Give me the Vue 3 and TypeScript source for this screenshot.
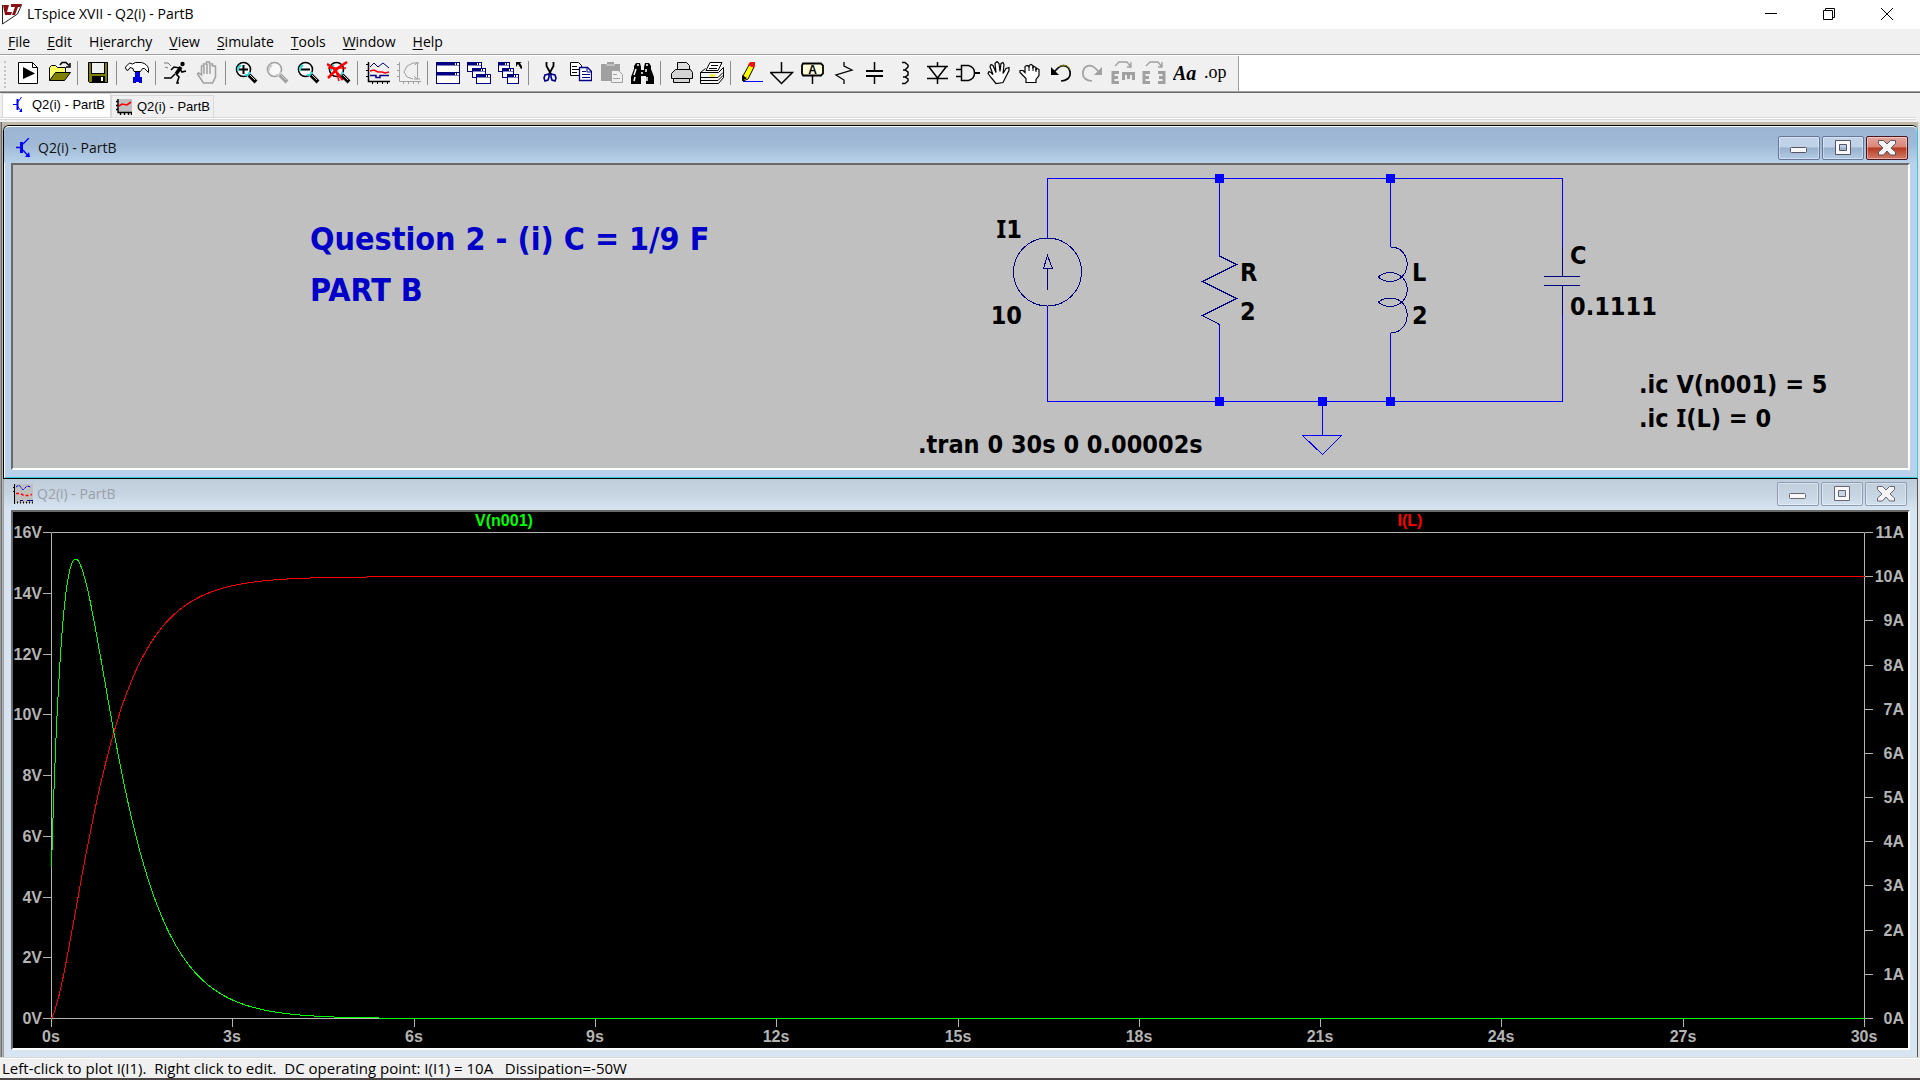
<script setup lang="ts">
interface Tool {
  name: string
  art: string
}

const menus = [
  { key: 'F', rest: 'ile' },
  { key: 'E', rest: 'dit' },
  { key: 'i', before: 'H', rest: 'erarchy' },
  { key: 'V', rest: 'iew' },
  { key: 'S', rest: 'imulate' },
  { key: 'T', rest: 'ools' },
  { key: 'W', rest: 'indow' },
  { key: 'H', rest: 'elp' },
]

const lens = (stroke: string, glint: string, inner: string) =>
  `<circle cx="9.500" cy="8.500" r="7" fill="#f8f8f8" stroke="${stroke}" stroke-width="1.600"/>
   <path d="M4 10V7l3-3M11 14h3l2-3" fill="none" stroke="${glint}" stroke-width="2"/>${inner}
   <path d="M15 14l7 7" stroke="${stroke}" stroke-width="4"/><path d="M16 14l5 5" stroke="#ccc" stroke-width="1"/>`

const miniWindow = (x: number, y: number, w: number, h: number) =>
  `<rect x="${x + 0.5}" y="${y + 0.5}" width="${w - 1}" height="${h - 1}" fill="#fff" stroke="#000080"/>
   <path d="M${x} ${y + 2}h${w}" stroke="#000080" stroke-width="3"/>
   <path d="M${x + w - 5} ${y + 2}h1m1 0h2" stroke="#fff" stroke-width="2"/>`

const openHand =
  'M9 22.500l-5-6-3-4 1-2 2 1 2 2-3-8 1-2 2 1 3 7-1-9 2-2 2 2 1 8 1-8 2-1 1 2-1 9 3-5 3-1v3l-4 8-2 4z'
const closedHand =
  'M8 21.500v-4l-6-6v-2h3l2 2v-6l2-1 2 1v1-2l2-1 2 1v2l1-1 2 1v2l1-1 2 1v6l-3 4v3z'

const toolGroups: Tool[][] = [
  [
    { name: 'New schematic', art: '<path d="M2.500 1.500h14l5 5v16h-19z" fill="#fff" stroke="#000"/><path d="M16.500 1.500v5h5" fill="none" stroke="#000"/><path d="M7 6l12 6.500L7 18z"/>' },
    { name: 'Open', art: '<path d="M2.500 19.500v-13l2-2h4l2 2h8v5" fill="#ff6" stroke="#000"/><path d="M2.500 19.500l6-8h15l-6 8z" fill="#808000" stroke="#000"/><path d="M13 4l2-2.500h4l3 3M23 2v4h-4" fill="none" stroke="#000" stroke-width="1.500"/>' },
  ],
  [{ name: 'Save', art: '<path d="M2.500 1.500h19v20h-18l-1-1z" fill="#808000" stroke="#000"/><rect x="5.500" y="1.500" width="13" height="11" fill="#f0f0f0" stroke="#000"/><path d="M6 15h13v6H6z"/><path d="M15 16h2v4h-2z" fill="#fff"/>' }],
  [{ name: 'Control panel', art: '<path d="M10 9h5v7h2v6h-3v-1h-3v1H8v-6h2z" fill="#0000e0"/><path d="M1 8.500L.5 6l4-4 3 1 3-1.500h6c4 1 6 3 7 6v4l-4-4-2 0-2 3H9l-1-3-3-1-2 3z" fill="#fff" stroke="#000"/>' }],
  [
    { name: 'Run', art: '<circle cx="18.500" cy="3" r="2.200"/><path d="M17 6l-5 7" stroke="#000" stroke-width="3.500"/><path d="M16 7l-6-1-3 3M16 8l2 3 4-1M12 13l3 3-2 6h2M11 13l-4 4H0" fill="none" stroke="#000" stroke-width="1.600"/><path d="M0 2h4l3 3M1 6l3 1" fill="none" stroke="#777"/>' },
    { name: 'Halt', art: '<path d="M8.500 22l-6-9 1-1 2 1 1 1V5h2v-2h3V1h3v2h3v2h3v11l-3 6z" fill="#f0f0f0" stroke="#a0a0a0" stroke-width="1.500"/><path d="M9 5v8M12 3v10M15 4v9" stroke="#a0a0a0" stroke-width="1.500"/>' },
  ],
  [
    { name: 'Zoom area', art: lens('#000', '#2dd', '<path d="M5 8.500h9M9.500 4v9" stroke="#000" stroke-width="2"/>') },
    { name: 'Pan', art: lens('#a0a0a0', '#ccc', '') },
    { name: 'Zoom back', art: lens('#000', '#2dd', '<path d="M5 8.500h9" stroke="#000" stroke-width="2"/>') },
    { name: 'Zoom to fit', art: lens('#000', '#2dd', '<path d="M0 3l6 4 10 12M20 1l-9 6L1 17" fill="none" stroke="#f00" stroke-width="2.500"/><path d="M1 7l18 0M9 10l3 10" stroke="#f00" stroke-width="1.500"/>') },
  ],
  [
    { name: 'Autorange', art: '<path d="M2.500 1v19.500H24" fill="none" stroke="#000" stroke-width="1.500"/><path d="M0 3.500h3M0 9.500h3M0 15.500h3M6.500 20v3M11.500 20v3M16.500 20v3M21.500 20v3" stroke="#000"/><path d="M4 6l4-4 4 4 5-4 6 5" fill="none" stroke="#008"/><path d="M4 10l4-1 4 2h4l3 1 4-1" fill="none" stroke="#f00" stroke-width="1.500"/><path d="M4 14.500h6v2h4v-2h9" fill="none" stroke="#008" stroke-width="1.500"/>' },
    { name: 'Efficiency report', art: '<path d="M2.500 1v19.500H24M0 3.500h3M0 9.500h3M0 15.500h3M6.500 20v3M11.500 20v3M16.500 20v3M21.500 20v3" fill="none" stroke="#a0a0a0"/><path d="M16 2l-6 3-3 6 3 5 6 2M20.500 2v16M16 2h6M17 18h6M20 1l-2 3M20 18l-3-3" fill="none" stroke="#a0a0a0"/>' },
  ],
  [
    { name: 'Tile windows', art: miniWindow(0, 1, 24, 11) + miniWindow(0, 11, 24, 12) },
    { name: 'Cascade windows', art: miniWindow(0, 1, 15, 10) + miniWindow(5, 7, 14, 10) + miniWindow(9, 13, 15, 10) },
    { name: 'Close windows', art: miniWindow(0, 1, 12, 10) + miniWindow(4, 7, 12, 10) + miniWindow(9, 13, 12, 10) + '<path d="M18 1h6l-2 1 3 5-2 1-3-5-2 3z"/>' },
  ],
  [
    { name: 'Cut', art: '<path d="M9.500 1v4l5 9M16.500 1v4l-5 9" fill="none" stroke="#000" stroke-width="1.800"/><path d="M12 13l-4 1-1 3 1 3 3-1 1-3zM14 13l4 1 1 3-1 3-3-1-1-3z" fill="none" stroke="#008" stroke-width="1.600"/>' },
    { name: 'Copy', art: '<path d="M2.500 1.500h8l3 3v10h-11z" fill="#fff" stroke="#000"/><path d="M4 5.500h5M4 8.500h7M4 11.500h5" stroke="#000"/><path d="M11.500 6.500h8l4 4v9h-12z" fill="#fff" stroke="#008" stroke-width="1.300"/><path d="M19 6v5h5M14 10.500h4M14 13.500h8M14 16.500h8" fill="none" stroke="#008"/>' },
    { name: 'Paste', art: '<path d="M2 3h6V1h7v2h6v17H2z" fill="#a0a0a0"/><path d="M7 4h9" stroke="#ddd"/><path d="M12.500 9.500h7l4 4v8h-11z" fill="#f0f0f0" stroke="#a0a0a0"/><path d="M14 13.500h4M14 17.500h7" stroke="#a0a0a0"/>' },
    { name: 'Find', art: '<path d="M4 5l2-3h4l1 4v3h3V6l1-4h4l2 3v3l3 8v7h-8v-8h-5v8H1v-7l3-8z"/><path d="M7 4h2M16 4h2M6 8l-2 6M16 8v3M5 16l-1 4M17 16v4M12 11v2" stroke="#fff" stroke-width="1.500"/>' },
  ],
  [
    { name: 'Print setup', art: '<path d="M8.500 9.500v-8h9l3 3v5" fill="#ddd" stroke="#000"/><path d="M2.500 12.500l4-4h15l2 3v6h-3v4h-16v-4h-2z" fill="#d4d4d4" stroke="#000"/><path d="M5 17.500h15" stroke="#000"/>' },
    { name: 'Print', art: '<path d="M6 9.500l4-8h12l-4 8z" fill="#fff" stroke="#000"/><path d="M11 4.500h7M9 7.500h8" stroke="#000"/><path d="M.5 11.500l5-4M18.500 11.500l5-5v10l-5 6H.5v-11z" fill="#f4f4f4" stroke="#000"/><path d="M1 16.500h17l5-5M1 19.500h17l5-5" fill="none" stroke="#000"/><path d="M10 14.500h5" stroke="#ee0" stroke-width="2"/>' },
  ],
  [
    { name: 'Wire', art: '<path d="M4 15l6-11 5 2-6 12-5 2z" fill="#ff0" stroke="#000"/><path d="M3 20v-6l5 3z"/><path d="M9 4l2-3h5v4l-1 2z" fill="#f01010"/><path d="M4 20.500h20" stroke="#00f"/>' },
    { name: 'Ground', art: '<path d="M11.500 1v10M.5 11.500h22l-11 11z" fill="none" stroke="#000" stroke-width="1.500"/>' },
    { name: 'Label net', art: '<path d="M2 2.500h18l2 2v8l-2 2H2l-1-2v-8z" fill="#ffd" stroke="#000" stroke-width="1.800"/><path d="M11.500 15v8" stroke="#000" stroke-width="1.500"/><text x="11.500" y="13" text-anchor="middle" font-family="Liberation Sans" font-size="12" font-weight="700">A</text>' },
    { name: 'Resistor', art: '<path d="M12 1v4l8 4-16 5 8 5v4" fill="none" stroke="#000" stroke-width="1.300"/>' },
    { name: 'Capacitor', art: '<path d="M11.500 1v8M11.500 15v8" stroke="#000" stroke-width="1.500"/><path d="M3 10h17M3 15h17" stroke="#000" stroke-width="2"/>' },
    { name: 'Inductor', art: '<path d="M8 1.500h3l3 2.500v2l-3 3H9h2l3 2v3l-3 2H9h2l3 2v2l-3 2.500H8" fill="none" stroke="#000" stroke-width="1.500"/>' },
    { name: 'Diode', art: '<path d="M12.500 1v4.500M12.500 17v6M2 5.500h21M2 17.500h21M4 6l8.500 11L21 6" fill="none" stroke="#000" stroke-width="1.500"/>' },
    { name: 'Component', art: '<path d="M5.500 4.500h7c4 1 6 4 6 7.500s-2 6.500-6 7.500h-7zM0 8.500h5M0 15.500h5" fill="none" stroke="#000" stroke-width="1.500"/><path d="M19 12h5" stroke="#000" stroke-width="2"/>' },
    { name: 'Move', art: `<path d="${openHand}" fill="#fff" stroke="#000" stroke-width="1.200"/>` },
    { name: 'Drag', art: `<path d="${closedHand}" fill="#fff" stroke="#000" stroke-width="1.200"/><path d="M11 5v5M15 5v5M18 7v4" stroke="#000"/>` },
    { name: 'Undo', art: '<path d="M4 12l5-5c4-4 11-3 12 4 1 6-4 9-9 9" fill="none" stroke="#000" stroke-width="1.700"/><path d="M10 6c4-3 9-2 11 3" fill="none" stroke="#880"/><path d="M2 6v8h8z"/>' },
    { name: 'Redo', art: '<path d="M20 12l-5-5C11 3 4 4 3 11c-1 6 4 9 9 9" fill="none" stroke="#a0a0a0" stroke-width="1.700"/><path d="M22 6v8h-8z" fill="#a0a0a0"/>' },
    { name: 'Rotate', art: '<path d="M4 5l4-4h8l4 5M20 1v5h-4" fill="none" stroke="#a0a0a0" stroke-width="1.300"/><path d="M8 11.500H2v10h6M2 16.500h5M11 12.500h13M12.500 12v7M17.500 12v6M22.500 12v7" fill="none" stroke="#a0a0a0" stroke-width="3"/>' },
    { name: 'Mirror', art: '<path d="M4 5l4-4h8l4 5M20 1v5h-4" fill="none" stroke="#a0a0a0" stroke-width="1.300"/><path d="M8 11.500H2v10h6M2 16.500h5M16 11.500h6v10h-6M22 16.500h-5" fill="none" stroke="#a0a0a0" stroke-width="3"/>' },
    { name: 'Text', art: '<text x="0" y="19" font-family="Liberation Serif" font-size="20" font-weight="700" font-style="italic">Aa</text>' },
    { name: 'SPICE directive', art: '<text x="0" y="17" font-family="Liberation Serif" font-size="18">.op</text>' },
  ],
]

/* Plot geometry */
const plot = { left: 51.5, right: 1864.5, top: 532.5, bottom: 1018.5 }
const xAt = (t: number) => plot.left + ((plot.right - plot.left) * t) / 30
const yAt = (value: number, max: number) => plot.bottom - ((plot.bottom - plot.top) * value) / max

const voltTicks = [16, 14, 12, 10, 8, 6, 4, 2, 0]
const ampTicks = [11, 10, 9, 8, 7, 6, 5, 4, 3, 2, 1, 0]
const timeTicks = [0, 3, 6, 9, 12, 15, 18, 21, 24, 27, 30]

/* Overdamped parallel RLC response, R = 2, L = 2, C = 1/9, 10 A step */
const voltage = (t: number) => 55 * Math.exp(-1.5 * t) - 50 * Math.exp(-3 * t)
const current = (t: number) => 10 - (55 / 3) * Math.exp(-1.5 * t) + (25 / 3) * Math.exp(-3 * t)

function trace(fn: (t: number) => number, max: number): string {
  const points: string[] = []
  for (let i = 0; i <= 1500; i++) {
    const t = i / 50
    points.push(`${xAt(t).toFixed(1)} ${yAt(fn(t), max).toFixed(2)}`)
  }
  return 'M' + points.join('L')
}

const voltagePath = trace(voltage, 16)
const currentPath = trace(current, 11)

const junctions = [
  [1219, 178], [1390, 178], [1219, 401], [1322, 401], [1390, 401],
]
const documents = [
  { id: 'schematic', active: true },
  { id: 'waveform', active: false },
]
</script>

<template>
  <div class="app">
    <header class="titlebar">
      <svg class="logo" width="20" height="22" viewBox="0 0 20 22">
        <path d="M.5 2v19l15-10 4-9" fill="#fff" stroke="#222" />
        <path d="M1 2h6L5 9h5l-1 3H3z" fill="#8b0e12" />
        <path d="M9 1h11l-2 3h-2l-3 8h-3l3-8H9z" fill="#8b0e12" />
      </svg>
      <h1>LTspice XVII - Q2(i) - PartB</h1>
      <button class="sys" aria-label="Minimize">
        <svg width="12" height="12" viewBox="0 0 12 12"><path d="M0 5.500h12" stroke="#000" /></svg>
      </button>
      <button class="sys" aria-label="Restore">
        <svg width="12" height="12" viewBox="0 0 12 12"><path d="M.5 2.500h9v9h-9zM2.500 2V.5h9v9H10" fill="none" stroke="#000" /></svg>
      </button>
      <button class="sys" aria-label="Close">
        <svg width="12" height="12" viewBox="0 0 12 12"><path d="M0 0l12 12M12 0L0 12" stroke="#000" /></svg>
      </button>
    </header>

    <nav class="menubar">
      <button v-for="m in menus" :key="m.key + m.rest">{{ m.before }}<u>{{ m.key }}</u>{{ m.rest }}</button>
    </nav>

    <div class="toolrow">
      <div class="toolbar" role="toolbar">
        <div v-for="(group, g) in toolGroups" :key="g" class="group">
          <button v-for="tool in group" :key="tool.name" :aria-label="tool.name">
            <svg width="24" height="24" viewBox="0 0 24 24" v-html="tool.art"></svg>
          </button>
        </div>
      </div>
    </div>

    <div class="tabs" role="tablist">
      <button v-for="doc in documents" :key="doc.id" role="tab" :class="['tab', { active: doc.active }]">
        <svg v-if="doc.id === 'schematic'" width="16" height="16" viewBox="0 0 16 16">
          <path d="M2 7.500h4M10.500 0L7 5M7 10l4 5" stroke="#00f" fill="none" /><path d="M6.500 2v11" stroke="#00f" stroke-width="2" /><path d="M11 15H8l3-4z" fill="#00f" />
        </svg>
        <svg v-else width="16" height="16" viewBox="0 0 16 16">
          <path d="M2 0h14v13H2z" fill="#c0c0c0" /><path d="M2 0v13.500h14M0 2.500h2M0 6.500h2M0 10.500h2M4.500 13v3M8.500 13v3M12.500 13v3M15.500 13v3" fill="none" stroke="#000" stroke-width="1.400" /><path d="M3 7l3-2 5 1 4-3" fill="none" stroke="#f00" stroke-width="1.600" />
        </svg>
        Q2(i) - PartB
      </button>
    </div>

    <main class="workspace">
      <section class="child focused">
        <header>
          <svg width="16" height="20" viewBox="0 0 16 20">
            <path d="M0 9.500h5M13 0L7 6M7 12l6 7" stroke="#00f" stroke-width="1.300" fill="none" /><path d="M5.500 4v11" stroke="#00f" stroke-width="3" /><path d="M14 19H9l4-5z" fill="#00f" />
          </svg>
          <h2>Q2(i) - PartB</h2>
          <button aria-label="Minimize"><svg width="20" height="16" viewBox="0 0 20 16"><rect x="1.500" y="7.500" width="16" height="5" rx="1" fill="#f8f8f8" stroke="#556" /></svg></button>
          <button aria-label="Maximize"><svg width="20" height="16" viewBox="0 0 20 16"><path d="M2.500.5h15v14h-15zM6.500 4.500v6h7v-6z" fill="#f8f8f8" stroke="#556" fill-rule="evenodd" /></svg></button>
          <button class="close" aria-label="Close"><svg width="20" height="16" viewBox="0 0 20 16"><path d="M1.500.5h5L10 4l3.500-3.500h5v3L14 8l4.500 4v3h-5L10 11l-3.500 4h-5v-3L6 8 1.500 3.500z" fill="#f4f4f4" stroke="#556" /></svg></button>
        </header>
        <div class="viewport">
          <svg class="canvas schematic" viewBox="13 165 1895 303">
            <g class="heading">
              <text x="310" y="250">Question 2 - (i) C = 1/9 F</text>
              <text x="310" y="301">PART B</text>
            </g>
            <g class="wire">
              <path d="M1047.500 238V178.500H1562.500V276M1047.500 306V401.500H1562.500V285M1219.500 178V256M1219.500 324V401M1390.500 178V247M1390.500 333V401M1322.500 401V435.500M1302.500 435.500H1341.500L1322.500 454.500z" />
            </g>
            <g class="symbol">
              <circle cx="1047.500" cy="272" r="34" />
              <path d="M1047.500 290V268.500M1043.500 268.500H1052.500L1047.500 255.500z" />
              <path d="M1219.500 256L1236.500 264.500L1202.500 281.500L1236.500 298.500L1202.500 315.500L1219.500 324.500" />
              <path d="M1390.500 247C1407 247 1412 267 1402 277C1409 284 1409 295 1402 302C1412 312 1407 333 1390.500 333" />
              <path d="M1378 277Q1390 268 1402 277Q1390 286 1378 277M1378 302Q1390 294 1402 302Q1390 311 1378 302" />
              <path d="M1544 276.500H1580M1544 285.500H1580M1562.500 247V276M1562.500 285V315" />
            </g>
            <rect v-for="[x, y] in junctions" :key="`${x}-${y}`" :x="x - 4" :y="y - 4" width="9" height="9" fill="#00f" />
            <g class="label">
              <text x="1022" y="238" text-anchor="end"><tspan class="serif-i">I</tspan>1</text>
              <text x="1022" y="324" text-anchor="end">10</text>
              <text x="1240" y="281">R</text>
              <text x="1240" y="320">2</text>
              <text x="1412" y="281">L</text>
              <text x="1412" y="324">2</text>
              <text x="1570" y="264">C</text>
              <text x="1570" y="315">0.1111</text>
              <text x="1639" y="393">.ic V(n001) = 5</text>
              <text x="1639" y="427">.ic <tspan class="serif-i">I</tspan>(L) = 0</text>
              <text x="918" y="453">.tran 0 30s 0 0.00002s</text>
            </g>
          </svg>
        </div>
      </section>

      <section class="child">
        <header>
          <svg width="20" height="20" viewBox="0 0 20 20">
            <path d="M1 0h19v19H1z" fill="#c0c0c0" /><path d="M1.500 0v20M0 3.500h2M0 7.500h2" stroke="#000" /><path d="M4 18.500h16" stroke="#000" stroke-width="2" stroke-dasharray="1 2" /><path d="M3 3l3-2 4 5 4-4 4 1" fill="none" stroke="#00f" stroke-dasharray="3 1" /><path d="M3 9.500h4l4 2h4l4-1" fill="none" stroke="#f00" stroke-width="1.500" stroke-dasharray="3 2" /><path d="M7 16.500h3M14 16.500h6" stroke="#008" />
          </svg>
          <h2>Q2(i) - PartB</h2>
          <button aria-label="Minimize"><svg width="20" height="16" viewBox="0 0 20 16"><rect x="1.500" y="7.500" width="16" height="5" rx="1" fill="#f8f8f8" stroke="#667" /></svg></button>
          <button aria-label="Maximize"><svg width="20" height="16" viewBox="0 0 20 16"><path d="M2.500.5h15v14h-15zM6.500 4.500v6h7v-6z" fill="#f8f8f8" stroke="#667" fill-rule="evenodd" /></svg></button>
          <button aria-label="Close"><svg width="20" height="16" viewBox="0 0 20 16"><path d="M1.500.5h5L10 4l3.500-3.500h5v3L14 8l4.500 4v3h-5L10 11l-3.500 4h-5v-3L6 8 1.500 3.500z" fill="#f4f4f4" stroke="#667" /></svg></button>
        </header>
        <div class="viewport">
          <svg class="canvas waveform" viewBox="13 512 1895 536">
            <text class="v" x="504" y="526" text-anchor="middle">V(n001)</text>
            <text class="i" x="1410" y="526" text-anchor="middle">I(L)</text>
            <g class="axis">
              <path :d="`M${plot.left} ${plot.top}H${plot.right}V${plot.bottom}H${plot.left}z`" />
              <path v-for="v in voltTicks" :key="v" :d="`M43 ${Math.floor(yAt(v, 16)) + 0.5}H51`" />
              <path v-for="a in ampTicks" :key="a" :d="`M1865 ${Math.floor(yAt(a, 11)) + 0.5}H1873`" />
              <path v-for="t in timeTicks" :key="t" :d="`M${Math.floor(xAt(t)) + 0.5} 1019V1027`" />
            </g>
            <g class="scale">
              <text v-for="v in voltTicks" :key="v" x="42" :y="Math.floor(yAt(v, 16)) + 6" text-anchor="end">{{ v }}V</text>
              <text v-for="a in ampTicks" :key="a" x="1904" :y="Math.floor(yAt(a, 11)) + 6" text-anchor="end">{{ a }}A</text>
              <text v-for="t in timeTicks" :key="t" :x="Math.floor(xAt(t))" y="1042" text-anchor="middle">{{ t }}s</text>
            </g>
            <path class="trace i" :d="currentPath" />
            <path class="trace v" :d="voltagePath" />
          </svg>
        </div>
      </section>
    </main>

    <footer class="status">Left-click to plot I(I1).&nbsp; Right click to edit.&nbsp; DC operating point: I(I1) = 10A&nbsp;&nbsp; Dissipation=-50W</footer>
  </div>
</template>

<style>
body {
  margin: 0;
  background: #f0f0f0;
}
</style>

<style scoped>
.app {
  display: flex;
  flex-direction: column;
  min-height: 100vh;
  box-sizing: border-box;
  background: #f0f0f0;
  color: #000;
  font: 14px/20px "Open Sans", "Noto Sans", sans-serif;
}
button {
  margin: 0;
  padding: 0;
  border: 0;
  background: none;
  color: inherit;
  font: inherit;
}
svg {
  display: block;
  flex: none;
}
h1,
h2 {
  flex: 1;
  margin: 0;
  font-size: 14px;
  font-weight: 400;
}
.titlebar {
  display: flex;
  align-items: center;
  box-sizing: border-box;
  height: 29px;
  padding: 0 4px 1px 2px;
  background: #fff;
}
.titlebar h1 {
  padding-left: 5px;
}
.sys {
  display: flex;
  align-items: center;
  justify-content: center;
  width: 58px;
  height: 28px;
}
.menubar {
  display: flex;
  gap: 17px;
  height: 25px;
  padding-left: 8px;
  border-bottom: 1px solid #a0a0a0;
}
.menubar u {
  text-underline-offset: 2px;
}
.toolrow {
  height: 36px;
  background: #fff;
  border-bottom: 1px solid #696969;
  box-shadow: inset 0 -1px #a0a0a0;
  padding-bottom: 1px;
}
.toolbar {
  display: inline-flex;
  height: 35px;
  margin-top: 1px;
  padding: 0 7px 1px 12px;
  box-sizing: border-box;
  background: #f0f0f0;
  border-right: 1px solid #a0a0a0;
  position: relative;
}
.toolbar::before {
  content: "";
  position: absolute;
  left: 4px;
  top: 5px;
  bottom: 3px;
  border-left: 2px dotted #c4c4c4;
}
.group {
  display: flex;
  align-items: center;
}
.group + .group::before {
  content: "";
  width: 1px;
  height: 24px;
  margin: 0 4px 0 3px;
  background: #8c8c8c;
}
.group button {
  padding: 0 3px 0 4px;
}
.tabs {
  display: flex;
  align-items: flex-end;
  height: 24px;
  margin: 0 4px 4px 0;
  padding-left: 2px;
  border-bottom: 1px solid #d9d9d9;
  box-shadow: 0 1px #fff, 0 2px #d9d9d9;
}
.tab {
  display: flex;
  align-items: center;
  gap: 5px;
  box-sizing: border-box;
  height: 22px;
  padding: 0 3px 0 4px;
  border: 1px solid #d9d9d9;
  border-bottom: 0;
  font: 13px/16px "Liberation Sans", Arial, sans-serif;
}
.tab.active {
  height: 24px;
  padding: 0 5px 2px 8px;
  background: #fff;
}
.workspace {
  padding: 3px 2px 0 3px;
  background: #c0b9aa;
  box-shadow: inset 1px 0 #a0a0a0, inset 2px 0 #696969, inset -2px 0 #e3e3e3;
}
.child {
  padding: 0 7px 7px;
  border-left: 1px solid #8fa0b0;
  border-right: 1px solid #555;
  background: #d7e4f2;
}
.child header {
  display: flex;
  align-items: center;
  gap: 2px;
  box-sizing: border-box;
  height: 31px;
  margin: 0 -7px;
  padding: 0 10px 1px 9px;
  background: linear-gradient(#bfcddb, #c7d4e2 50%, #d7e4f2);
  color: #99a0a8;
}
.child header h2 {
  padding-left: 2px;
}
.child header button {
  display: flex;
  align-items: center;
  justify-content: center;
  box-sizing: border-box;
  width: 42px;
  height: 24px;
  border: 1px solid #8e9bb5;
  border-radius: 2px;
  box-shadow: inset 0 0 0 1px rgba(255, 255, 255, 0.4);
}
.child.focused {
  padding-bottom: 8px;
  border: 1px solid #000;
  border-right-color: #35c8e0;
  border-radius: 6px 6px 0 0;
  background: #b9d1ea;
  box-shadow: inset 0 1px #fff, inset 1px 0 #fff, inset 0 -1px #35c8e0;
}
.child.focused header {
  height: 37px;
  padding: 6px 9px 0 12px;
  border-radius: 5px 5px 0 0;
  border-top: 1px solid #fff;
  background: linear-gradient(#9ab4d3, #a0bad6 50%, #b9d1ea);
  color: #111;
}
.child.focused header h2 {
  padding-left: 4px;
}
.child.focused header button {
  border-color: #66769a;
  background: linear-gradient(#c0d2e8 45%, #97b0cc 50%, #b4cbe4);
}
.child.focused header .close {
  border-color: #4a1420;
  background: linear-gradient(#e4a49a, #d98678 45%, #b83a22 50%, #d17c66);
}
.viewport {
  border: 2px solid;
  border-color: #696969 #fff #fff #696969;
}
.canvas {
  width: 100%;
  height: auto;
}
.schematic {
  background: #c0c0c0;
}
.waveform {
  background: #000;
  font: 700 16px "Liberation Sans", Arial, sans-serif;
}
.heading {
  fill: #0000c8;
  font: 700 32px "DejaVu Sans Condensed", "DejaVu Sans", sans-serif;
}
.label {
  fill: #000;
  font: 700 25px "DejaVu Sans Condensed", "DejaVu Sans", sans-serif;
}
.serif-i {
  font-family: "Noto Sans", sans-serif;
}
.wire {
  fill: none;
  stroke: #00f;
  shape-rendering: crispEdges;
}
.symbol {
  fill: none;
  stroke: #000080;
  shape-rendering: crispEdges;
}
.axis {
  fill: none;
  stroke: #b4b4b4;
}
.scale {
  fill: #b4b4b4;
}
.v {
  fill: #0f0;
}
.i {
  fill: #f00;
}
.trace {
  fill: none;
  shape-rendering: crispEdges;
}
.trace.v {
  stroke: #0f0;
}
.trace.i {
  stroke: #f00;
}
.status {
  flex: 1;
  padding: 1px 2px 0;
  border-top: 1px solid #d9d9d9;
  border-bottom: 2px solid #4a4646;
  font-size: 15px;
  line-height: 19px;
  white-space: nowrap;
  box-shadow: inset 0 1px #fff;
}
</style>
